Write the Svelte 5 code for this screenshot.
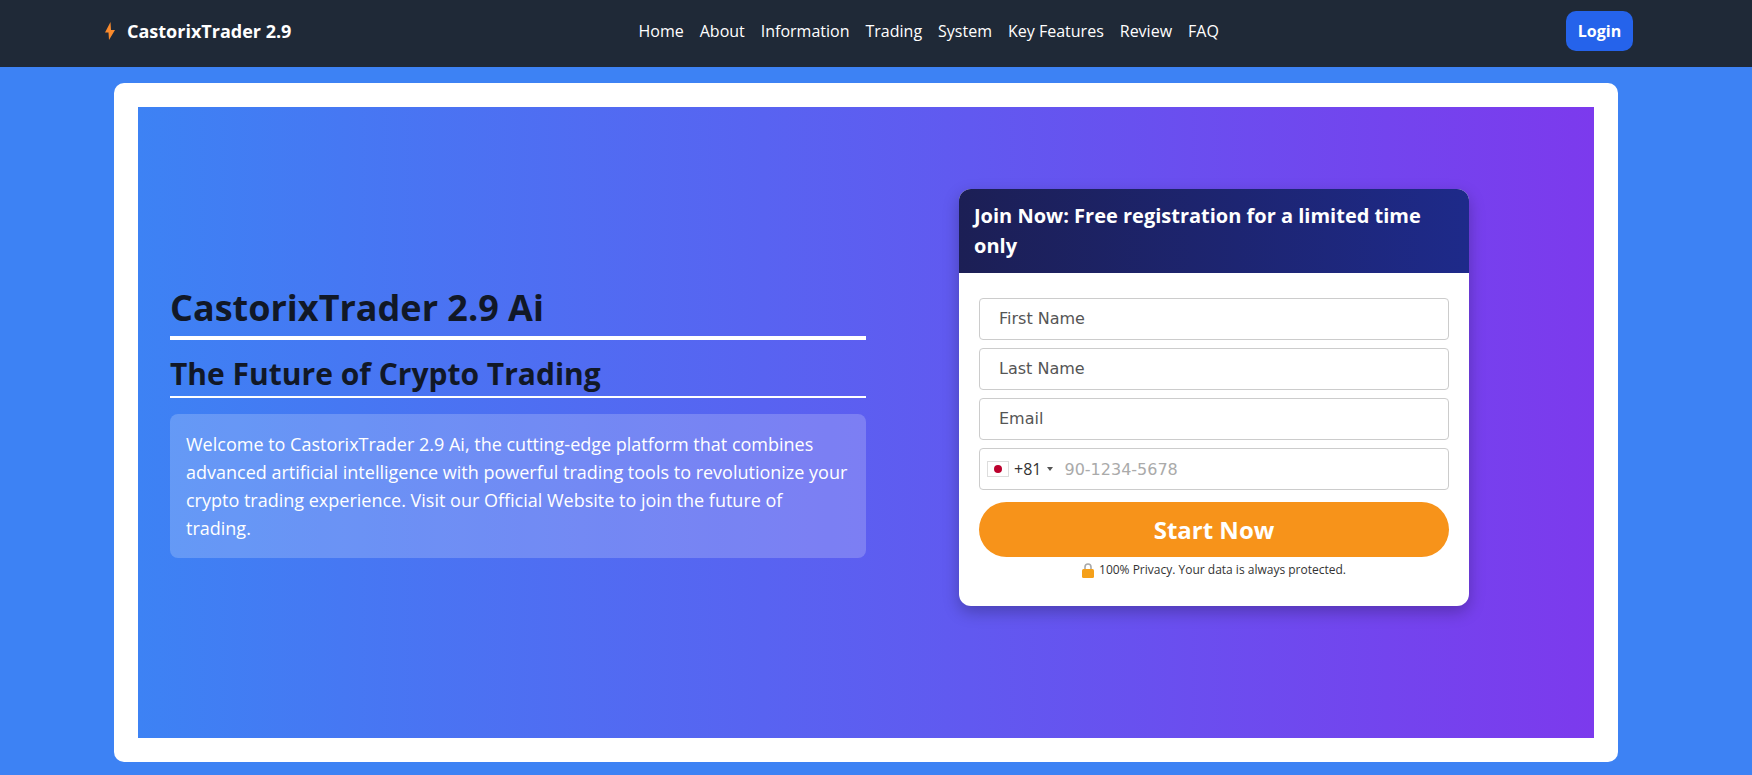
<script>
  const navLinks = ['Home', 'About', 'Information', 'Trading', 'System', 'Key Features', 'Review', 'FAQ']
  const fields = [
    { type: 'text', placeholder: 'First Name' },
    { type: 'text', placeholder: 'Last Name' },
    { type: 'email', placeholder: 'Email' },
  ]
</script>

<header class="topbar">
  <a class="brand" href="#top">
    <svg class="bolt" width="12" height="18" viewBox="0 0 12 18" aria-hidden="true">
      <path d="M6.5 0 1 10.5h3.5L5 18l6-10H7z" fill="#f98a2c" />
    </svg>
    <span>CastorixTrader 2.9</span>
  </a>
  <nav class="nav">
    {#each navLinks as link}
      <a href="#top">{link}</a>
    {/each}
  </nav>
  <button class="login" type="button">Login</button>
</header>

<main class="page">
  <div class="card">
    <section class="hero">
      <div class="intro">
        <h1>CastorixTrader 2.9 Ai</h1>
        <h2>The Future of Crypto Trading</h2>
        <p>
          Welcome to CastorixTrader 2.9 Ai, the cutting-edge platform that combines advanced artificial
          intelligence with powerful trading tools to revolutionize your crypto trading experience. Visit
          our Official Website to join the future of trading.
        </p>
      </div>
      <div class="form-col">
        <form class="signup" on:submit|preventDefault>
          <h3>Join Now: Free registration for a limited time only</h3>
          <div class="fields">
            {#each fields as field}
              <input class="field" type={field.type} placeholder={field.placeholder} />
            {/each}
            <div class="field phone">
              <svg class="flag" width="22" height="16" viewBox="0 0 22 16" aria-hidden="true">
                <rect x="0.5" y="0.5" width="21" height="15" fill="#fff" stroke="#ddd" />
                <circle cx="11" cy="8" r="4" fill="#bc002d" />
              </svg>
              <span class="code">+81</span>
              <span class="caret"></span>
              <input type="tel" placeholder="90-1234-5678" />
            </div>
            <button class="start" type="submit">Start Now</button>
            <div class="privacy">
              <svg width="12" height="15" viewBox="0 0 12 15" aria-hidden="true">
                <path d="M3 7V4a3 3 0 0 1 6 0v3" fill="none" stroke="#a9a9a9" stroke-width="1.6" />
                <rect y="6" width="12" height="9" rx="1.5" fill="#f5a019" />
              </svg>
              <span>100% Privacy. Your data is always protected.</span>
            </div>
          </div>
        </form>
      </div>
    </section>
  </div>
</main>

<style>
  :global(body) {
    background: #3d82f4;
    font-family: 'Open Sans', sans-serif;
  }

  .topbar {
    height: 67px;
    box-sizing: border-box;
    padding: 0 119px 5px 104px;
    display: flex;
    align-items: center;
    justify-content: space-between;
    background: #1f2937;
  }

  .brand {
    display: flex;
    align-items: center;
    gap: 11px;
    color: #fff;
    font-size: 18px;
    font-weight: 700;
    text-decoration: none;
  }

  .nav {
    display: flex;
    gap: 16px;
  }

  .nav a {
    color: #fff;
    font-size: 16px;
    text-decoration: none;
  }

  .login {
    width: 67px;
    height: 40px;
    padding: 0;
    border: none;
    border-radius: 10px;
    background: #2563eb;
    color: #fff;
    font-family: inherit;
    font-size: 16px;
    font-weight: 700;
  }

  .page {
    padding: 16px 134px 13px 114px;
  }

  .card {
    padding: 24px;
    border-radius: 10px;
    background: #fff;
  }

  .hero {
    height: 631px;
    box-sizing: border-box;
    padding: 0 32px;
    display: grid;
    grid-template-columns: 1fr 1fr;
    align-items: center;
    background: linear-gradient(to right, #3d82f4, #7c3aed);
  }

  .intro {
    padding-bottom: 3px;
  }

  .intro h1 {
    margin: 0 0 13px;
    padding-bottom: 5px;
    border-bottom: 4px solid #fff;
    color: #111827;
    font-size: 36px;
    line-height: 47px;
    font-weight: 700;
  }

  .intro h2 {
    margin: 0 0 16px;
    padding-bottom: 2px;
    border-bottom: 2px solid #fff;
    color: #111827;
    font-size: 30px;
    line-height: 41px;
    font-weight: 700;
  }

  .intro p {
    margin: 0;
    padding: 16px;
    border-radius: 8px;
    background: rgba(255, 255, 255, 0.2);
    color: #fff;
    font-size: 18px;
    line-height: 28px;
  }

  .form-col {
    display: flex;
    justify-content: center;
    padding-bottom: 50px;
  }

  .signup {
    width: 510px;
    border-radius: 12px;
    overflow: hidden;
    background: #fff;
    box-shadow: 0 6px 16px rgba(0, 0, 0, 0.25);
  }

  .signup h3 {
    margin: 0;
    padding: 12px 16px 12px 15px;
    background: linear-gradient(to right, #1c1f55, #1e2a8a);
    color: #fff;
    font-size: 20px;
    line-height: 30px;
    font-weight: 700;
  }

  .fields {
    padding: 25px 20px 27px;
    display: flex;
    flex-direction: column;
  }

  .field {
    height: 42px;
    box-sizing: border-box;
    margin-bottom: 8px;
    padding: 0 20px 2px 19px;
    border: 1px solid #ccc;
    border-radius: 4px;
    background: #fff;
    font-family: 'DejaVu Sans', sans-serif;
    font-size: 16px;
  }

  .field::placeholder {
    color: #555;
  }

  .phone {
    padding: 0 0 0 6px;
    display: flex;
    align-items: center;
  }

  .flag {
    margin-left: 1px;
  }

  .code {
    margin-left: 5px;
    color: #333;
    font-family: 'Open Sans', sans-serif;
    font-size: 16px;
  }

  .caret {
    margin-left: 6px;
    border-left: 3px solid transparent;
    border-right: 3px solid transparent;
    border-top: 4px solid #555;
  }

  .phone input {
    flex: 1;
    min-width: 0;
    margin-left: 11px;
    padding: 0;
    border: none;
    outline: none;
    font-family: inherit;
    font-size: 16px;
  }

  .phone input::placeholder {
    color: #aaa;
  }

  .start {
    height: 55px;
    margin-top: 4px;
    border: none;
    border-radius: 28px;
    background: #f7931a;
    color: #fff;
    font-family: inherit;
    font-size: 24px;
    font-weight: 700;
  }

  .privacy {
    margin-top: 4px;
    display: flex;
    align-items: center;
    justify-content: center;
    gap: 5px;
    color: #333;
    font-size: 12px;
    line-height: 18px;
  }
</style>
